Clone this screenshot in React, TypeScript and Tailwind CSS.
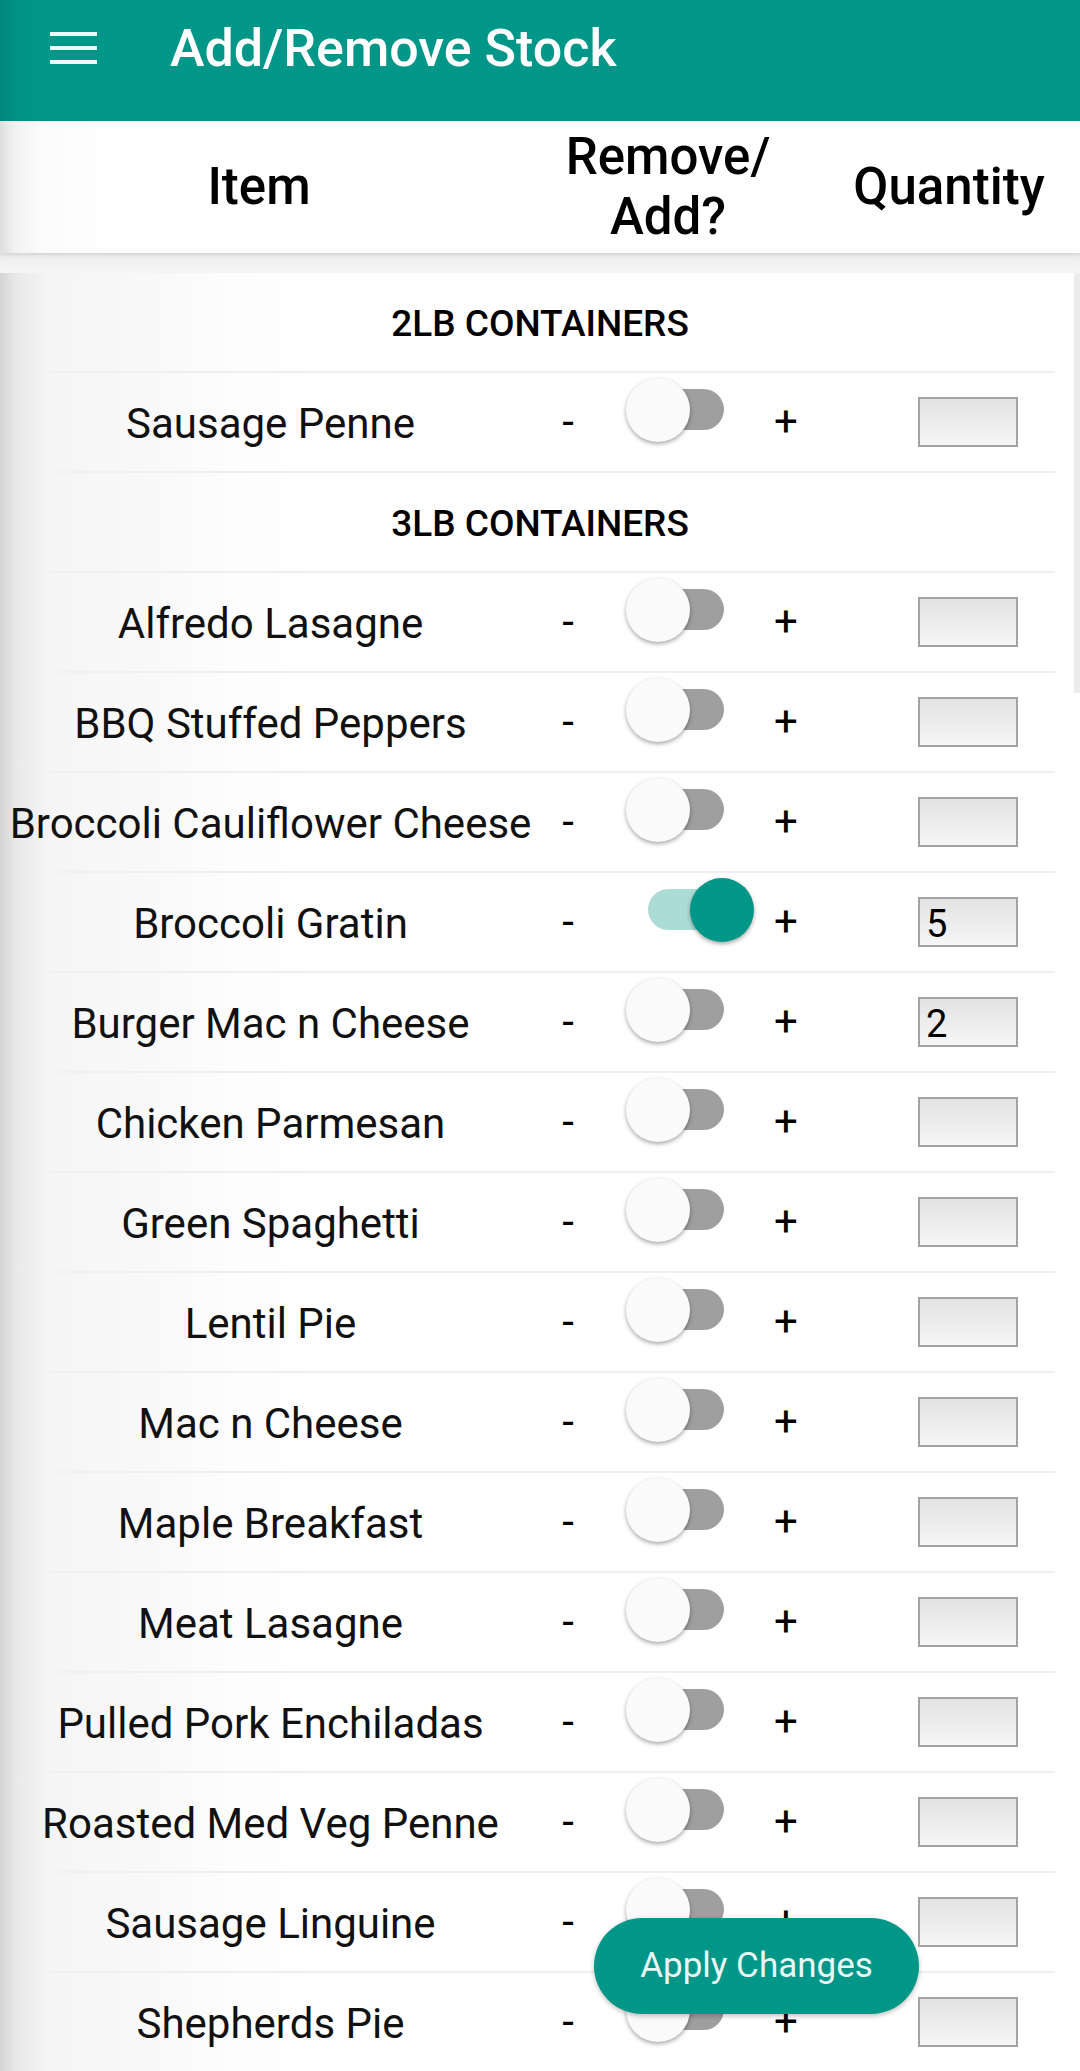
import React from "react";

type Row =
  | { kind: "section"; label: string }
  | { kind: "item"; name: string; on?: boolean; qty?: string };

const rows: Row[] = [
  { kind: "section", label: "2LB CONTAINERS" },
  { kind: "item", name: "Sausage Penne" },
  { kind: "section", label: "3LB CONTAINERS" },
  { kind: "item", name: "Alfredo Lasagne" },
  { kind: "item", name: "BBQ Stuffed Peppers" },
  { kind: "item", name: "Broccoli Cauliflower Cheese" },
  { kind: "item", name: "Broccoli Gratin", on: true, qty: "5" },
  { kind: "item", name: "Burger Mac n Cheese", qty: "2" },
  { kind: "item", name: "Chicken Parmesan" },
  { kind: "item", name: "Green Spaghetti" },
  { kind: "item", name: "Lentil Pie" },
  { kind: "item", name: "Mac n Cheese" },
  { kind: "item", name: "Maple Breakfast" },
  { kind: "item", name: "Meat Lasagne" },
  { kind: "item", name: "Pulled Pork Enchiladas" },
  { kind: "item", name: "Roasted Med Veg Penne" },
  { kind: "item", name: "Sausage Linguine" },
  { kind: "item", name: "Shepherds Pie" },
];

function Toggle({ on }: { on?: boolean }) {
  return (
    <div className="relative w-[128px] h-[64px] mb-[24px] shrink-0">
      <div
        className={
          "absolute left-[22px] top-[11px] w-[76px] h-[41px] rounded-full " +
          (on ? "bg-[#acdcd6]" : "bg-[#9f9f9f]")
        }
      />
      <div
        className={
          "absolute top-0 w-[64px] h-[64px] rounded-full shadow-[0_2px_4px_rgba(0,0,0,0.35)] " +
          (on ? "left-[64px] bg-[#009688]" : "left-0 bg-[#fafafa]")
        }
      />
    </div>
  );
}

function Divider() {
  return (
    <div className="ml-[50px] mr-[25px] h-[2px] bg-[linear-gradient(90deg,rgba(236,236,236,0.4),#efefef_120px,#f0f0f0)]" />
  );
}

export default function App() {
  return (
    <div
      className="relative w-[1080px] h-[2071px] overflow-hidden bg-white text-black"
      style={{ fontFamily: "Roboto, 'Noto Sans', sans-serif" }}
    >
      {/* Toolbar */}
      <div className="h-[121px] bg-[linear-gradient(90deg,#00877b_0px,#009386_18px,#009688_40px)] flex items-start pt-[23px]">
        <div className="ml-[50px] mt-[9px] w-[47px] flex flex-col gap-[10px]">
          <div className="h-[4px] bg-[#eafaf8]" />
          <div className="h-[4px] bg-[#eafaf8]" />
          <div className="h-[4px] bg-[#eafaf8]" />
        </div>
        <div className="ml-[73px] text-[52px] leading-[52px] font-medium text-white whitespace-nowrap">
          Add/Remove Stock
        </div>
      </div>

      {/* Column header */}
      <div className="relative z-10 h-[132px] flex items-center bg-[linear-gradient(90deg,#dedede_0px,#f1f1f1_14px,#fbfbfb_40px,#ffffff_120px)] shadow-[0_2px_3px_rgba(0,0,0,0.10)]">
        <div className="w-[518px] text-center text-[51px] leading-[60px] font-medium">Item</div>
        <div className="w-[300px] text-center text-[51px] leading-[60px] font-medium">
          Remove/
          <br />
          Add?
        </div>
        <div className="w-[262px] text-center text-[51px] leading-[60px] font-medium">Quantity</div>
      </div>

      {/* List */}
      <div className="bg-[linear-gradient(90deg,#d4d4d4_0px,#e9e9e9_16px,#f5f5f5_50px,#f9f9f9_160px,#fdfdfd_240px,#ffffff_320px)]">
        <div className="h-[20px] bg-[linear-gradient(180deg,#ececec,#f5f5f5)]" />
        {rows.map((r, i) =>
          r.kind === "section" ? (
            <div key={i} className="h-[100px] flex flex-col">
              <div className="h-[98px] flex items-center justify-center text-[37px] leading-[37px] font-medium pt-[2px]">
                {r.label}
              </div>
              <Divider />
            </div>
          ) : (
            <div key={i} className="h-[100px] flex flex-col">
              <div className="h-[98px] flex items-center">
                <div className="w-[541px] text-center text-[42px] leading-[42px] whitespace-nowrap pt-[4px] text-[#111]">
                  {r.name}
                </div>
                <div className="w-[54px] text-center text-[42px] leading-[42px] shrink-0">-</div>
                <div className="w-[31px] shrink-0" />
                <Toggle on={r.on} />
                <div className="w-[64px] text-center text-[42px] leading-[42px] shrink-0">+</div>
                <div className="w-[262px] pl-[100px] shrink-0">
                  <div className="w-[100px] h-[50px] border-2 border-[#a3a3a3] bg-[linear-gradient(180deg,#e3e3e3,#f6f6f6)] flex items-center pl-[6px] text-[38px] leading-[38px] pt-[4px]">
                    {r.qty ?? ""}
                  </div>
                </div>
              </div>
              <Divider />
            </div>
          )
        )}
      </div>

      {/* Scroll indicator */}
      <div className="absolute right-0 top-[273px] w-[6px] h-[420px] bg-[#ececec]" />

      {/* Floating button */}
      <div className="absolute left-[594px] top-[1918px] w-[325px] h-[96px] rounded-full bg-[#009688] shadow-[0_2px_5px_rgba(0,0,0,0.25)] flex items-center justify-center text-[35px] text-[#e9f6f4]">
        Apply Changes
      </div>
    </div>
  );
}
